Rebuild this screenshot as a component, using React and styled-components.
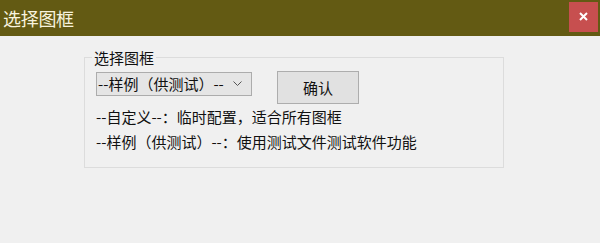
import React from "react";
import styled, { createGlobalStyle } from "styled-components";

const Global = createGlobalStyle`
  html, body { margin: 0; padding: 0; background: #f0f0f0; }
  body {
    font-family: "Noto Sans CJK SC", "Noto Sans", sans-serif;
    -webkit-font-smoothing: antialiased;
  }
  * { box-sizing: border-box; }
`;

const Window = styled.div`
  width: 600px;
  height: 243px;
  background: #f0f0f0;
  display: flex;
  flex-direction: column;
`;

const TitleBar = styled.div`
  height: 36px;
  background: #635a13;
  display: flex;
  align-items: center;
  justify-content: space-between;
  padding: 0 2px 0 3px;
`;

const Title = styled.div`
  color: #f7f3de;
  font-size: 18px;
  line-height: 20px;
  letter-spacing: -0.3px;
`;

const CloseButton = styled.div`
  width: 29px;
  height: 30px;
  margin-top: -3px;
  background: #c74f4f;
  color: #fff;
  display: flex;
  align-items: center;
  justify-content: center;
`;

const Body = styled.div`
  padding: 21px 0 0 84px;
`;

const Group = styled.div`
  position: relative;
  width: 420px;
  height: 111px;
  border: 1px solid #dcdcdc;
  padding: 13px 0 0 11px;
`;

const Caption = styled.div`
  position: absolute;
  left: 7px;
  top: -10px;
  padding: 0 2px;
  background: #f0f0f0;
  font-size: 15px;
  line-height: 20px;
  color: #111;
`;

const ControlRow = styled.div`
  display: flex;
  align-items: flex-start;
  gap: 25px;
`;

const SelectBox = styled.div`
  width: 156px;
  height: 24px;
  margin-top: 1px;
  background: #e5e5e5;
  border: 1px solid #acacac;
  display: flex;
  align-items: center;
  justify-content: space-between;
  padding: 0 9px 0 1px;
  font-size: 15px;
  color: #111;
  line-height: 20px;
`;

const Button = styled.div`
  width: 82px;
  height: 33px;
  background: #e1e1e1;
  border: 1px solid #adadad;
  display: flex;
  align-items: center;
  justify-content: center;
  font-size: 15px;
  color: #111;
`;

const Line = styled.div`
  font-size: 15px;
  line-height: 25px;
  color: #111;
  white-space: nowrap;
`;

export default function App() {
  return (
    <>
      <Global />
      <Window>
        <TitleBar>
          <Title>选择图框</Title>
          <CloseButton>
            <svg width="9" height="9" viewBox="0 0 9 9">
              <path d="M1 1 L8 8 M8 1 L1 8" stroke="#fff" strokeWidth="2" />
            </svg>
          </CloseButton>
        </TitleBar>
        <Body>
          <Group>
            <Caption>选择图框</Caption>
            <ControlRow>
              <SelectBox>
                <span>--样例（供测试）--</span>
                <svg width="9" height="6" viewBox="0 0 9 6">
                  <path d="M0.5 0.5 L4.5 4.5 L8.5 0.5" stroke="#555" strokeWidth="1" fill="none" />
                </svg>
              </SelectBox>
              <Button>确认</Button>
            </ControlRow>
            <Line>--自定义--：临时配置，适合所有图框</Line>
            <Line>--样例（供测试）--：使用测试文件测试软件功能</Line>
          </Group>
        </Body>
      </Window>
    </>
  );
}
